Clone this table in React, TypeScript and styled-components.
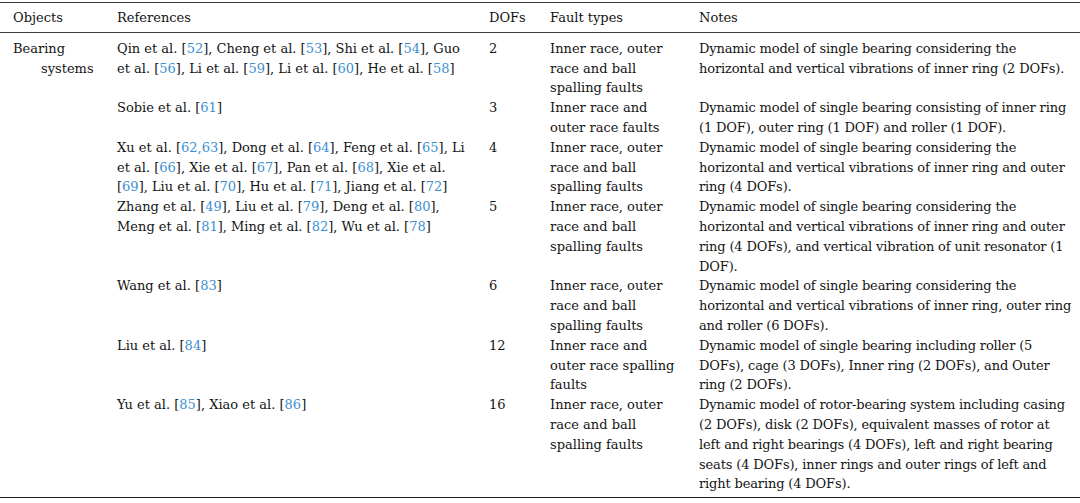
import React from "react";
import styled, { createGlobalStyle } from "styled-components";

const Global = createGlobalStyle`
  html, body { margin: 0; padding: 0; background: #ffffff; }
  body {
    font-family: "DejaVu Serif", "Liberation Serif", serif;
    font-size: 13px;
    line-height: 19.8px;
    color: #141414;
  }
`;

const Table = styled.div`
  margin-top: 2px;
  width: 1080px;
  border-top: 1px solid #3a3a3a;
  border-bottom: 1px solid #222;
  box-shadow: 0 1px 0 #b5b5b5;
`;

const cols = "104px 372px 61px 149px 1fr";

const HeadRow = styled.div`
  display: grid;
  grid-template-columns: ${cols};
  padding: 5px 0 4px;
  border-bottom: 1px solid #3f3f3f;
`;

const HeadCell = styled.div`
  padding-left: 13px;
`;

const Body = styled.div`
  display: flex;
  padding: 6px 0 3px;
`;

const ObjectCell = styled.div`
  width: 104px;
  flex: none;
  box-sizing: border-box;
  padding-left: 41px;
  text-indent: -28px;
`;

const Rows = styled.div`
  flex: 1;
  display: flex;
  flex-direction: column;
`;

const Row = styled.div`
  display: grid;
  grid-template-columns: 372px 61px 149px 1fr;
`;

const Cell = styled.div`
  padding-left: 13px;
`;

const NoteCell = styled.div`
  padding-left: 13px;
  padding-right: 8px;
  letter-spacing: -0.15px;
`;

const Ref = styled.span`
  color: #3b8fd2;
`;

type RefItem = [string, string];

const rows: { refs: RefItem[]; dofs: string; fault: string; notes: string }[] = [
  {
    refs: [
      ["Qin et al. ", "52"],
      ["Cheng et al. ", "53"],
      ["Shi et al. ", "54"],
      ["Guo et al. ", "56"],
      ["Li et al. ", "59"],
      ["Li et al. ", "60"],
      ["He et al. ", "58"],
    ],
    dofs: "2",
    fault: "Inner race, outer race and ball spalling faults",
    notes:
      "Dynamic model of single bearing considering the horizontal and vertical vibrations of inner ring (2 DOFs).",
  },
  {
    refs: [["Sobie et al. ", "61"]],
    dofs: "3",
    fault: "Inner race and outer race faults",
    notes:
      "Dynamic model of single bearing consisting of inner ring (1 DOF), outer ring (1 DOF) and roller (1 DOF).",
  },
  {
    refs: [
      ["Xu et al. ", "62,63"],
      ["Dong et al. ", "64"],
      ["Feng et al. ", "65"],
      ["Li et al. ", "66"],
      ["Xie et al. ", "67"],
      ["Pan et al. ", "68"],
      ["Xie et al. ", "69"],
      ["Liu et al. ", "70"],
      ["Hu et al. ", "71"],
      ["Jiang et al. ", "72"],
    ],
    dofs: "4",
    fault: "Inner race, outer race and ball spalling faults",
    notes:
      "Dynamic model of single bearing considering the horizontal and vertical vibrations of inner ring and outer ring (4 DOFs).",
  },
  {
    refs: [
      ["Zhang et al. ", "49"],
      ["Liu et al. ", "79"],
      ["Deng et al. ", "80"],
      ["Meng et al. ", "81"],
      ["Ming et al. ", "82"],
      ["Wu et al. ", "78"],
    ],
    dofs: "5",
    fault: "Inner race, outer race and ball spalling faults",
    notes:
      "Dynamic model of single bearing considering the horizontal and vertical vibrations of inner ring and outer ring (4 DOFs), and vertical vibration of unit resonator (1 DOF).",
  },
  {
    refs: [["Wang et al. ", "83"]],
    dofs: "6",
    fault: "Inner race, outer race and ball spalling faults",
    notes:
      "Dynamic model of single bearing considering the horizontal and vertical vibrations of inner ring, outer ring and roller (6 DOFs).",
  },
  {
    refs: [["Liu et al. ", "84"]],
    dofs: "12",
    fault: "Inner race and outer race spalling faults",
    notes:
      "Dynamic model of single bearing including roller (5 DOFs), cage (3 DOFs), Inner ring (2 DOFs), and Outer ring (2 DOFs).",
  },
  {
    refs: [
      ["Yu et al. ", "85"],
      ["Xiao et al. ", "86"],
    ],
    dofs: "16",
    fault: "Inner race, outer race and ball spalling faults",
    notes:
      "Dynamic model of rotor-bearing system including casing (2 DOFs), disk (2 DOFs), equivalent masses of rotor at left and right bearings (4 DOFs), left and right bearing seats (4 DOFs), inner rings and outer rings of left and right bearing (4 DOFs).",
  },
];

export default function App() {
  return (
    <>
      <Global />
      <Table>
        <HeadRow>
          <HeadCell>Objects</HeadCell>
          <HeadCell>References</HeadCell>
          <HeadCell>DOFs</HeadCell>
          <HeadCell>Fault types</HeadCell>
          <HeadCell>Notes</HeadCell>
        </HeadRow>
        <Body>
          <ObjectCell>Bearing systems</ObjectCell>
          <Rows>
            {rows.map((r, i) => (
              <Row key={i}>
                <Cell>
                  {r.refs.map(([name, num], j) => (
                    <React.Fragment key={j}>
                      {j > 0 ? ", " : ""}
                      {name}[<Ref>{num}</Ref>]
                    </React.Fragment>
                  ))}
                </Cell>
                <Cell>{r.dofs}</Cell>
                <Cell>{r.fault}</Cell>
                <NoteCell>{r.notes}</NoteCell>
              </Row>
            ))}
          </Rows>
        </Body>
      </Table>
    </>
  );
}
